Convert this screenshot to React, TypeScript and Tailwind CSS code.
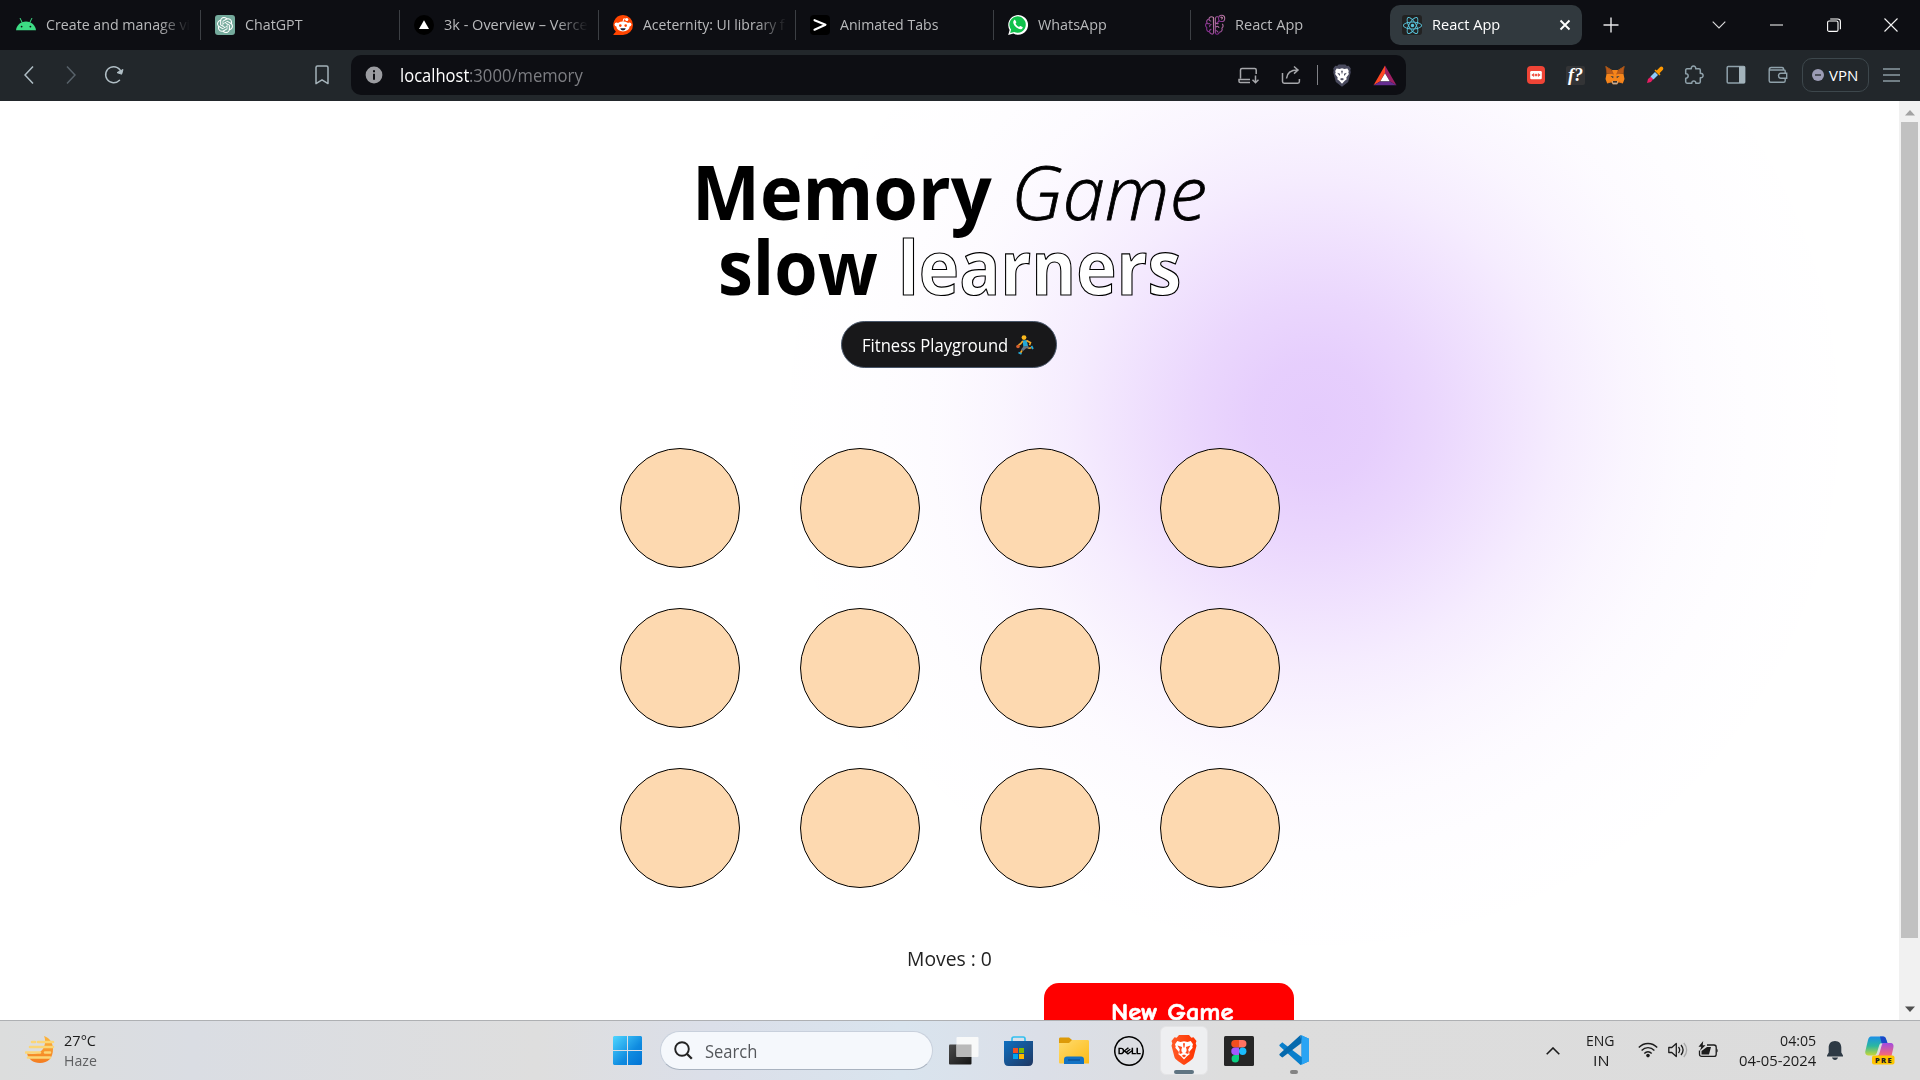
import { useLayoutEffect, useRef, useState, type ReactNode } from 'react';
import { SiDell, SiOpenai, SiReact } from 'react-icons/si';

/** One line of text condensed or widened to a given advance width. */
function Fit({ w, children, className = '' }: { w: number; children: ReactNode; className?: string }) {
  const ref = useRef<HTMLSpanElement>(null);
  const [scale, setScale] = useState(1);
  useLayoutEffect(() => {
    if (ref.current) setScale(w / ref.current.offsetWidth);
  }, [w]);
  return (
    <span className={`block shrink-0 whitespace-nowrap ${className}`} style={{ width: w }}>
      <span ref={ref} className="inline-block origin-left whitespace-nowrap" style={{ transform: `scaleX(${scale})` }}>
        {children}
      </span>
    </span>
  );
}

const AndroidIcon = () => (
  <svg viewBox="0 0 20 20" className="size-5 shrink-0">
    <path d="M0 15.2C.4 10.600 4.500 6.500 10 6.500s9.600 4.100 10 8.700z" fill="#3ddc84" />
    <path d="M4.200 3.400l2 4.200M15.800 3.400l-2 4.200" stroke="#3ddc84" strokeWidth="1" strokeLinecap="round" />
    <circle cx="5.600" cy="11.600" r=".9" fill="#0e0f14" />
    <circle cx="14.400" cy="11.600" r=".9" fill="#0e0f14" />
  </svg>
);

const ChatIcon = () => (
  <div className="flex size-5 shrink-0 items-center justify-center rounded-[3px] bg-[#74aa9c]">
    <SiOpenai className="size-4 text-white" />
  </div>
);

const VercelIcon = () => (
  <svg viewBox="0 0 20 20" className="size-5 shrink-0">
    <circle cx="10" cy="10" r="10" fill="#000" />
    <path d="M10 5.200L15 14H5z" fill="#fff" />
  </svg>
);

const RedditIcon = () => (
  <svg viewBox="0 0 20 20" className="size-5 shrink-0">
    <path d="M10 0a10 10 0 0 1 0 20H1.200c-.8 0-1-.6-.5-1.100l2.200-2.200A10 10 0 0 1 10 0z" fill="#ff4500" />
    <circle cx="3.600" cy="9.600" r="2" fill="#fff" />
    <circle cx="16.400" cy="9.600" r="2" fill="#fff" />
    <ellipse cx="10" cy="11.400" rx="6.600" ry="5" fill="#fff" />
    <path d="M10 6.800l.7-3 2.600.5" stroke="#fff" strokeWidth="1" fill="none" />
    <circle cx="13.800" cy="4.400" r="1.500" fill="#fff" />
    <circle cx="7.300" cy="10.600" r="1.300" fill="#ff4500" />
    <circle cx="12.700" cy="10.600" r="1.300" fill="#ff4500" />
    <path d="M7.300 13.200h5.400c-.4 1.600-1.400 2.200-2.700 2.200s-2.300-.6-2.700-2.200z" fill="#223" />
  </svg>
);

const AceternityIcon = () => (
  <svg viewBox="0 0 20 20" className="size-5 shrink-0">
    <rect width="20" height="20" rx="4" fill="#000" />
    <path d="M4.500 5.200l11 4.500-11 5" stroke="#fff" strokeWidth="2.100" fill="none" strokeLinejoin="round" strokeLinecap="round" />
  </svg>
);

const WhatsAppIcon = () => (
  <svg viewBox="0 0 20 20" className="size-5 shrink-0">
    <path d="M.2 19.900l1.400-5A9.900 9.900 0 1 1 5.400 18.600z" fill="#fff" />
    <path d="M2.200 17.900l.9-3.300a8.200 8.200 0 1 1 3 2.400z" fill="#10c14b" />
    <path
      d="M7.300 5.200c-.3-.6-.9-.5-1.300 0-1.900 2.100.1 5 1.700 6.600 1.700 1.700 4.600 3.300 6.400 1.900.7-.6.9-1.500.3-1.800l-1.900-.9c-.4-.2-.7.1-1.200.8-.4.5-3.600-2-3.700-3.300.5-.5.9-1 .7-1.400z"
      fill="#fff"
    />
  </svg>
);

const BrainIcon = () => (
  <svg viewBox="0 0 20 20" className="size-5 shrink-0 overflow-visible">
    <defs>
      <linearGradient id="brain" x1="0" x2="1" y1=".8" y2="0">
        <stop offset="0" stopColor="#7a1f8a" />
        <stop offset="1" stopColor="#c58ba8" />
      </linearGradient>
    </defs>
    <g fill="none" stroke="url(#brain)" strokeWidth="1.100">
      <path d="M8.400 2.400C6 .8 4 2.400 4 4 1.600 4.600 1.200 6.600 2 8c-1.900 1-1.900 3.400-.2 4.600C1 15 2.600 16.700 4.400 16.800c1 2.600 3.600 3 4.200 1z" />
      <path d="M10.300 3c.8-1.400 2-1.500 2.600-1M10.300 18c1 2 3.400 1.600 4-.8 2.400-.2 3.400-2.200 2.600-4 1.400-1.200 1.600-3 .4-4.400" />
      <path d="M4 4c0 1.600 1 2.200 2.200 2M2 8c1 1 2 1 3 .4M6.500 9.500C5 9.500 4 11 5 12M4.400 16.800c0-1.600.8-2.400 2-2.400M10.500 7c.2 1.400 1.600 2 3 1.400M11 12c1-1 2.600-.8 3 .8M10.600 15.500c1 0 1.800.6 2.400 1.700M10.300 3v15" />
      <circle cx="16.600" cy="3.400" r="3.100" />
      <path d="M15.800 3c.1-1.200 1.700-1 1.600 0 0 .7-.8.7-.8 1.400M14 6l-2 2" />
    </g>
  </svg>
);

const ReactIcon = () => (
  <div className="flex size-5 shrink-0 items-center justify-center rounded-[3px] bg-[#222]">
    <SiReact className="size-[19px] text-[#58c4dc]" />
  </div>
);

type TabData = { icon: ReactNode; title: string; w: number; tabWidth: number; clipped?: boolean };

const tabs: TabData[] = [
  { icon: <AndroidIcon />, title: 'Create and manage vi', w: 144, tabWidth: 199, clipped: true },
  { icon: <ChatIcon />, title: 'ChatGPT', w: 58, tabWidth: 199 },
  { icon: <VercelIcon />, title: '3k - Overview – Verce', w: 144, tabWidth: 199, clipped: true },
  { icon: <RedditIcon />, title: 'Aceternity: UI library f', w: 142, tabWidth: 197, clipped: true },
  { icon: <AceternityIcon />, title: 'Animated Tabs', w: 98, tabWidth: 198 },
  { icon: <WhatsAppIcon />, title: 'WhatsApp', w: 69, tabWidth: 197 },
  { icon: <BrainIcon />, title: 'React App', w: 68, tabWidth: 199 },
];

function Tab({ tab, last }: { tab: TabData; last: boolean }) {
  return (
    <div className="flex h-10 shrink-0 items-center pl-[14px]" style={{ width: tab.tabWidth }}>
      {tab.icon}
      <div
        className={
          tab.clipped
            ? 'ml-[10px] w-[144px] -translate-y-px overflow-hidden [mask-image:linear-gradient(90deg,#000_78%,transparent)]'
            : 'ml-[10px] w-[144px] -translate-y-px overflow-hidden'
        }
      >
        <Fit w={tab.w} className="text-[15px] leading-5 text-[#b9babc]">{tab.title}</Fit>
      </div>
      {!last && <div className="ml-auto h-[30px] w-px bg-[#3c3f44]" />}
    </div>
  );
}

function TabBar() {
  return (
    <div className="flex h-[50px] items-center bg-[#0d0e13] pl-[2px]">
      {tabs.map((t, i) => (
        <Tab key={i} tab={t} last={i === tabs.length - 1} />
      ))}
      <div className="flex h-10 w-[192px] shrink-0 items-center rounded-[10px] bg-[#31393e] pl-3">
        <ReactIcon />
        <Fit w={68} className="ml-[10px] -translate-y-px text-[15px] leading-5 text-white">React App</Fit>
        <svg viewBox="0 0 12 12" className="ml-[59px] size-3">
          <path d="M1.500 1.500l9 9M10.500 1.500l-9 9" stroke="#fff" strokeWidth="1.900" />
        </svg>
      </div>
      <svg viewBox="0 0 16 16" className="ml-[21px] size-4 shrink-0">
        <path d="M8 .5v15M.5 8h15" stroke="#e8e8ea" strokeWidth="1.400" />
      </svg>
      <svg viewBox="0 0 14 8" className="ml-[93px] h-2 w-[14px] shrink-0">
        <path d="M.7.700L7 7 13.300.700" stroke="#dcdcde" strokeWidth="1.100" fill="none" />
      </svg>
      <svg viewBox="0 0 13 13" className="ml-[44px] size-[13px] shrink-0">
        <path d="M0 6h13" stroke="#fff" strokeWidth="1" />
      </svg>
      <svg viewBox="0 0 14 14" className="ml-[44px] size-[14px] shrink-0">
        <rect x=".6" y="3" width="10.400" height="10.400" rx="1.500" stroke="#fff" fill="none" strokeWidth="1.100" />
        <path d="M3.200 1h7.500c1.700 0 2.700 1 2.700 2.700v7.500" stroke="#fff" fill="none" strokeWidth="1.100" />
      </svg>
      <svg viewBox="0 0 14 14" className="ml-[43px] size-[14px] shrink-0">
        <path d="M.5.500l13 13M13.500.500l-13 13" stroke="#f4f4f4" strokeWidth="1.100" />
      </svg>
    </div>
  );
}

const LION =
  'M10 4.500l2.600.6 3-.5 1.500 2.600-.5 1.600.6 1.700-2.700 3.600.4 1.900-2 1.500L10 20.500l-2.900-3-2-1.500.4-1.900-2.700-3.600.6-1.700-.5-1.600 1.500-2.600 3 .5z';

function LionShield() {
  return (
    <svg viewBox="0 0 20 24" className="ml-[14px] h-[23px] w-5 shrink-0">
      <path d="M6.500.500h7l1.600 1.600 1.900-.3 2.200 3-.5 1.700.5 2-2.800 10.300-6.400 5-6.400-5L.8 8.500l.5-2-.5-1.700 2.200-3 1.900.3z" fill="#494a5e" />
      <path d={LION} fill="#fff" />
      <path d="M5 9l3 1.200-.4 2.400zM15 9l-3 1.200.4 2.400zM10 14.500l-2.300 1.200L10 17.300l2.300-1.600zM9 7l1 4 1-4z" fill="#494a5e" />
    </svg>
  );
}

const FoxIcon = () => (
  <svg viewBox="0 0 20 20" className="ml-[20px] h-5 w-5 shrink-0">
    <path d="M.5 1l6.500 4h6l6.500-4L18.300 8l1.200 6-1.700 4.500-4-1.200-1.600 1.900H7.800l-1.600-1.900-4 1.200L.5 14l1.200-6z" fill="#f6851b" />
    <path d="M.5 1L7.500 5.800 6 8.500l-4.300.2L1 6zM19.500 1l-7 4.800L14 8.500l4.300.2L19 6z" fill="#763d16" />
    <path d="M1 1.500l6.500 4.800L9 9.500 1.800 8zM19 1.500l-6.500 4.800L11 9.500 18.200 8z" fill="#b85a1a" />
    <path d="M5.500 11l3 .6-.4 1.600zM14.500 11l-3 .6.400 1.600z" fill="#233447" />
    <path d="M7 16.300h6l-.8 2.900H7.800z" fill="#c0ad9e" />
    <path d="M8 16.200h4v1.300H8z" fill="#161616" />
    <path d="M3 17.800l3.200-1.300M17 17.800l-3.200-1.300" stroke="#e2761b" />
  </svg>
);

function Toolbar() {
  return (
    <div className="flex h-[51px] items-center bg-[#22272b] pb-px pl-6">
      <svg viewBox="0 0 10 20" className="h-5 w-[10px] shrink-0">
        <path d="M9 1.500L1 10l8 8.500" stroke="#b0bec5" strokeWidth="1.500" fill="none" />
      </svg>
      <svg viewBox="0 0 10 20" className="ml-8 h-5 w-[10px] shrink-0">
        <path d="M1 1.500L9 10l-8 8.500" stroke="#58626a" strokeWidth="1.500" fill="none" />
      </svg>
      <svg viewBox="0 0 20 20" className="ml-7 size-5 shrink-0">
        <path d="M15.500 15.200A8 8 0 1 1 17.500 8" stroke="#b0bec5" strokeWidth="1.500" fill="none" strokeLinecap="round" />
        <path d="M13 7.600l4.600 1.600L19 4.500z" fill="#b0bec5" stroke="#b0bec5" strokeLinejoin="round" />
      </svg>
      <svg viewBox="0 0 14 20" className="ml-[191px] h-5 w-[14px] shrink-0">
        <path d="M1 2.500C1 1.500 1.600 1 2.500 1h9c.9 0 1.500.5 1.500 1.500V18.600L7 14.800 1 18.600z" stroke="#a4b2b9" strokeWidth="1.500" fill="none" strokeLinejoin="round" />
      </svg>
      <div className="ml-[22px] flex h-10 w-[1055px] shrink-0 items-center rounded-[10px] bg-[#0d0e13] pl-[14px]">
        <svg viewBox="0 0 18 18" className="size-[18px] shrink-0">
          <circle cx="9" cy="9" r="8.400" fill="#9b9ca1" />
          <path d="M9 4.300v2M9 7.700v6" stroke="#0d0e13" strokeWidth="2" />
        </svg>
        <div className="ml-[17px] flex text-[17.5px] leading-6">
          <Fit w={69} className="text-white">localhost</Fit>
          <Fit w={114} className="text-[#7c7d82]">:3000/memory</Fit>
        </div>
        <svg viewBox="0 0 21 18" className="ml-auto h-[18px] w-[21px] shrink-0 translate-y-[1px]">
          <path d="M18.200 7V3c0-.9-.5-1.500-1.500-1.500H4C3 1.500 2.500 2.100 2.500 3v8.500M12 12.500H1v1.800c0 .9.500 1.300 1.300 1.300H12" stroke="#a6a7ab" strokeWidth="1.500" fill="none" />
          <path d="M17.500 8.500v7M14.500 12.800l3 3 3-3" stroke="#a6a7ab" strokeWidth="1.500" fill="none" />
        </svg>
        <svg viewBox="0 0 20 20" className="ml-[22px] size-5 shrink-0">
          <path d="M1.500 8v8.500c0 1 .7 1.700 1.700 1.700h13.500c1 0 1.700-.7 1.700-1.700V14" stroke="#a6a7ab" strokeWidth="1.500" fill="none" />
          <path d="M5.500 13.500C6 8.500 9 5 16.500 5M13 1.500L17 5l-4 3.600" stroke="#a6a7ab" strokeWidth="1.500" fill="none" />
        </svg>
        <div className="ml-[16px] h-5 w-px shrink-0 bg-[#808186]" />
        <LionShield />
        <svg viewBox="0 0 24 21" className="mr-[9px] ml-[21px] h-[21px] w-6 shrink-0">
          <path d="M12 .5V8L7 16.500.500 20.300z" fill="#ff4724" />
          <path d="M12 .5l11.500 19.800L17 16.500 12 8z" fill="#9e1f63" />
          <path d="M.5 20.300L7 16.500h10l6.500 3.800z" fill="#662d91" />
          <path d="M12 8.200l4.700 8.100H7.300z" fill="#fff" />
        </svg>
      </div>
      <svg viewBox="0 0 18 18" className="ml-[121px] size-[18px] shrink-0">
        <rect width="18" height="18" rx="4" fill="#ef4436" />
        <rect x="3.200" y="5" width="11.600" height="8.200" rx="1.200" fill="#fff" />
        <path d="M4.800 9l2-1.400v2.800zM13.200 9l-2-1.400v2.800zM8 8.300h2v1.500H8z" fill="#ef4436" stroke="#ef4436" strokeWidth=".6" />
      </svg>
      <div className="ml-[21px] flex size-[19px] shrink-0 items-center justify-center rounded-[2px] bg-[#333436]">
        <span className="font-['Liberation_Serif',serif] text-[18px] leading-none font-bold text-white italic">f?</span>
      </div>
      <FoxIcon />
      <svg viewBox="0 0 18 18" className="ml-[21px] size-[18px] shrink-0">
        <path d="M1 17l1-4 3-2.500 2.500 2.300L5 16z" fill="#e91e63" />
        <path d="M4.500 10.500L9 6l3 3-4.500 4.500z" fill="#90caf9" />
        <path d="M8.500 4.500l5 5 1-1-1-1.300 3.200-3.200c1.800-1.900-.9-4.600-2.800-2.800L10.700 4.400 9.500 3.500z" fill="#ff9800" />
      </svg>
      <svg viewBox="0 0 20 20" className="ml-[20px] size-5 shrink-0">
        <path
          d="M3 3.800h4.300c-.6-3.700 5-3.700 4.400 0H15c.9 0 1.300.5 1.300 1.300v3.300c3.700-.6 3.700 5 0 4.400v4c0 .9-.4 1.400-1.300 1.400h-3.200c.3-3-4.300-3-4 0H3c-.9 0-1.300-.5-1.300-1.400v-3.600c3.300.3 3.300-4.800 0-4.500V5.100c0-.8.400-1.300 1.300-1.300z"
          stroke="#8fa1aa" strokeWidth="1.500" fill="none" strokeLinejoin="round"
        />
      </svg>
      <svg viewBox="0 0 20 20" className="ml-[22px] size-5 shrink-0">
        <rect x="1.200" y="1.500" width="17.500" height="16.500" rx="1" stroke="#8fa1aa" strokeWidth="1.500" fill="none" />
        <path d="M13 1.500h6v16.500h-6z" fill="#a3b3bb" />
      </svg>
      <svg viewBox="0 0 20 20" className="ml-[22px] size-5 shrink-0">
        <path d="M1.200 5v10.700c0 .9.600 1.500 1.500 1.500h13c.9 0 1.500-.6 1.500-1.500V6c0-.6-.4-1-1-1zm0 0c0-1.700.8-2.500 2-2.500H14c1.200 0 1.700.7 1.700 2.500" stroke="#8fa1aa" strokeWidth="1.400" fill="none" />
        <path d="M18.700 8.300h-6c-1.500 0-2.200 1-2.200 2.200s.7 2.700 2.200 2.700h6z" stroke="#8fa1aa" strokeWidth="1.400" fill="#22272b" />
      </svg>
      <div className="ml-[14px] flex h-[34px] w-[67px] shrink-0 items-center rounded-[10px] border border-[#3d474c] pl-[9px]">
        <svg viewBox="0 0 12 12" className="size-3">
          <circle cx="6" cy="6" r="6" fill="#9b9bb4" />
          <path d="M3 6h6" stroke="#22272b" strokeWidth="1.300" />
        </svg>
        <Fit w={29} className="ml-[5px] text-[15px] leading-5 text-white">VPN</Fit>
      </div>
      <svg viewBox="0 0 17 14" className="ml-[14px] h-[14px] w-[17px] shrink-0">
        <path d="M0 1h17M0 7h17M0 13h17" stroke="#8c9ca4" strokeWidth="1.400" />
      </svg>
    </div>
  );
}

const Runner = () => (
  <svg viewBox="0 0 18 20" className="ml-[8px] h-5 w-[18px]">
    <circle cx="8" cy="2.600" r="2.400" fill="#fbb91e" />
    <path d="M6.500 5.500l4.200-.5 1.300 6-4.600 1z" fill="#23a9d8" />
    <path d="M10.500 5.500l4 2.200-1 2.500M6.800 6L4.600 8.800 2.500 10" stroke="#f0a92a" strokeWidth="1.600" fill="none" />
    <path d="M7.500 11.500l4.800-.5 1 3-3-.7L7 16l-2-1.500z" fill="#647687" />
    <path d="M6 15.500L4.500 18M12.500 13.300l3-.5" stroke="#f0a92a" strokeWidth="1.600" />
    <path d="M2.500 17.500l3 1.600M15.500 11l1.500 3" stroke="#23a9d8" strokeWidth="1.700" />
    <circle cx="2" cy="11.500" r="1.800" fill="#d65f2e" />
  </svg>
);

function Game() {
  return (
    <main className="flex h-[919px] flex-1 flex-col items-center overflow-hidden bg-white bg-[radial-gradient(circle_555px_at_1314px_320px,rgba(168,85,247,0.305)_0,rgba(168,85,247,0.285)_11%,rgba(168,85,247,0.235)_22%,rgba(168,85,247,0.172)_33%,rgba(168,85,247,0.11)_44%,rgba(168,85,247,0.06)_56%,rgba(168,85,247,0.028)_67%,rgba(168,85,247,0.012)_78%,rgba(168,85,247,0.004)_89%,transparent)]">
      <h1 className="mt-[53px] flex flex-col items-center text-[74.500px] leading-[75px] text-black">
        <span className="flex">
          <Fit w={300} className="font-bold">Memory</Fit>
          <Fit w={196} className="ml-[19px] font-light italic [-webkit-text-stroke:0.8px_#000]">Game</Fit>
        </span>
        <span className="flex font-bold">
          <Fit w={160}>slow</Fit>
          <Fit w={283} className="ml-[20px] text-white [-webkit-text-stroke:1.200px_#000]">learners</Fit>
        </span>
      </h1>
      <button className="mt-[17px] mr-[2px] flex h-[47px] w-[216px] shrink-0 items-center rounded-full border border-[#475569] bg-[#18181a] pl-[20px] text-[17.5px] text-white">
        <Fit w={146} className="translate-y-px font-medium">Fitness Playground</Fit>
        <Runner />
      </button>
      <div className="mt-[80px] grid shrink-0 grid-cols-4 gap-x-[60px] gap-y-[40px]">
        {Array.from({ length: 12 }, (_, i) => (
          <div key={i} className="size-[120px] rounded-full border border-black bg-[#fdd9b0]" />
        ))}
      </div>
      <Fit w={85} className="mt-[56px] text-[20px] leading-[30px] text-[#222]">Moves : 0</Fit>
      <button className="mt-[9px] ml-[439px] flex h-[60px] w-[250px] shrink-0 justify-center rounded-[15px] bg-[#ff0000] pt-[12px]">
        <Fit w={123} className="font-['Comic_Sans_MS','Comic_Neue','Lato',sans-serif] text-[25px] leading-[34px] font-bold text-white [-webkit-text-stroke:0.6px_white]">
          New Game
        </Fit>
      </button>
    </main>
  );
}

function Scrollbar() {
  return (
    <div className="flex w-[21px] shrink-0 flex-col items-center bg-[#f1f1f1]">
      <svg viewBox="0 0 10 6" className="mt-[9px] h-[6px] w-[10px]"><path d="M5 0l5 5.500H0z" fill="#a3a3a3" /></svg>
      <div className="mt-[6px] h-[816px] w-[17px] bg-[#c1c1c1]" />
      <svg viewBox="0 0 10 6" className="mt-auto mb-[8px] h-[6px] w-[10px]"><path d="M5 6l5-5.500H0z" fill="#505050" /></svg>
    </div>
  );
}

function Taskbar() {
  return (
    <footer className="flex h-[60px] shrink-0 items-center border-t border-[#aeb0b3] bg-[linear-gradient(90deg,#dcdddd_0%,#dadde3_10%,#dedede_28%,#dbdfe9_37%,#d9e4ee_47%,#dbdfe8_54%,#dddddd_64%,#dcdcdc_100%)]">
      <svg viewBox="0 0 30 30" className="ml-[25px] size-[30px] shrink-0 -translate-y-px">
        <defs>
          <linearGradient id="sun" x1="0" x2="0" y1="0" y2="1">
            <stop offset="0" stopColor="#fbb63e" />
            <stop offset="1" stopColor="#f47c20" />
          </linearGradient>
        </defs>
        <path d="M19 1c5 1.500 9 6 9 13 0 9-5 14-13 14-7 0-12-4-13-10 6 2 14 1 17-6 1.500-4 1.500-8 0-11z" fill="url(#sun)" />
        <path d="M7 7h3M13 7h15M5 12h23M1 17.500h14M20 17.500h5M3 22.500h22" stroke="#fbd676" strokeWidth="2.600" strokeLinecap="round" />
      </svg>
      <div className="ml-[9px] -translate-y-[1.5px] text-[15px] leading-5">
        <Fit w={32} className="text-[#1c1c1c]">27°C</Fit>
        <Fit w={33} className="text-[#5e5f61]">Haze</Fit>
      </div>
      <svg viewBox="0 0 29 29" className="ml-[516px] size-[29px] shrink-0">
        <defs>
          <linearGradient id="win" x1="0" x2="1" y1="0" y2="1">
            <stop offset="0" stopColor="#4fd6ff" />
            <stop offset=".6" stopColor="#0f8be0" />
            <stop offset="1" stopColor="#0273d4" />
          </linearGradient>
        </defs>
        <path d="M1 0h13v14H0V1zM15 0h13l1 1v13H15zM0 15h14v14H1l-1-1zM15 15h14v13l-1 1H15z" fill="url(#win)" />
      </svg>
      <div className="ml-[18px] flex h-[39px] w-[273px] shrink-0 items-center rounded-full border border-[#c8d0dc] border-b-[#a9b3c0] bg-[#f5f8fc] pl-[13px]">
        <svg viewBox="0 0 19 19" className="size-[19px]">
          <circle cx="8" cy="8" r="6.800" stroke="#222" strokeWidth="1.900" fill="none" />
          <path d="M12.800 12.800l5 5" stroke="#222" strokeWidth="2.300" />
        </svg>
        <Fit w={52} className="ml-3 text-[17.5px] leading-6 text-[#55585c]">Search</Fit>
      </div>
      <svg viewBox="0 0 30 28" className="ml-4 h-[28px] w-[30px] shrink-0">
        <defs>
          <linearGradient id="tv" x1="0" x2="1" y1="0" y2="1">
            <stop offset="0" stopColor="#4b4b4b" />
            <stop offset="1" stopColor="#151515" />
          </linearGradient>
        </defs>
        <rect y="7.500" width="22.500" height="20" rx="1" fill="url(#tv)" />
        <rect x="7.500" y="0" width="22" height="20" rx="1" fill="#fafafa" opacity=".95" />
        <rect x="7.500" y="7.500" width="15" height="12.500" fill="#b9b9b9" />
      </svg>
      <svg viewBox="0 0 29 30" className="ml-[25px] h-[30px] w-[29px] shrink-0">
        <defs>
          <linearGradient id="store" x1="0" x2="1" y1="0" y2="1">
            <stop offset="0" stopColor="#0f6fc0" />
            <stop offset="1" stopColor="#1f3762" />
          </linearGradient>
        </defs>
        <path d="M8 6V3c0-1.200.6-2 1.800-2h9.400C20.400 1 21 1.800 21 3v3" stroke="#34c0f0" strokeWidth="1.700" fill="none" />
        <path d="M0 5h29v20c0 3-1.500 5-4.500 5h-20C1.500 30 0 28 0 25z" fill="url(#store)" />
        <path d="M9 12h5v5H9z" fill="#f25022" /><path d="M15 12h5v5h-5z" fill="#7fba00" />
        <path d="M9 18h5v5H9z" fill="#00a4ef" /><path d="M15 18h5v5h-5z" fill="#ffb900" />
      </svg>
      <svg viewBox="0 0 30 28" className="ml-[26px] h-[28px] w-[30px] shrink-0">
        <defs>
          <linearGradient id="fold" x1="0" x2="1" y1="0" y2="1">
            <stop offset="0" stopColor="#ffdb6e" />
            <stop offset="1" stopColor="#fdbb16" />
          </linearGradient>
        </defs>
        <path d="M0 2c0-1 .6-1.500 1.500-1.500H10L13 3v5H0z" fill="#dd9a08" />
        <path d="M0 6h10l3-3h15.500c1 0 1.500.5 1.500 1.500v22H1.500c-1 0-1.500-.5-1.500-1.500z" fill="url(#fold)" />
        <path d="M5 27v-4.500c0-2 1-3 3-3h14c2 0 3 1 3 3V27z" fill="#1272c4" />
        <path d="M9 23h12" stroke="#0b4a8d" strokeWidth="1.200" />
      </svg>
      <SiDell className="ml-[25px] size-[30px] shrink-0 text-black" />
      <div className="ml-4 flex h-[49px] w-12 shrink-0 flex-col items-center rounded-[6px] border border-[#e4e4e6] bg-[#eeeff1] pt-[8px]">
        <svg viewBox="0 0 26 30" className="h-[30px] w-[26px] shrink-0">
          <defs>
            <linearGradient id="brave" x1="0" x2="1">
              <stop offset="0" stopColor="#ff5a26" />
              <stop offset="1" stopColor="#ff3300" />
            </linearGradient>
          </defs>
          <path d="M8 0h10l2.300 2.700 2.200-.4L25.500 6l-.8 2.200.8 2.500-3 11.500c-.7 2-4.500 4.800-9.500 7.800-5-3-8.800-5.800-9.500-7.800L.5 10.700l.8-2.500L.5 6l3-3.700 2.200.4z" fill="url(#brave)" />
          <path d="M13 6.200l3.500.8 3.200-.9 2.300 3.200-.7 2 .4 1.500-3.600 4.200.5 2.200-2.600 2L13 24.500l-3-3.300-2.600-2 .5-2.200-3.600-4.200.4-1.500-.7-2 2.300-3.200 3.200.9z" fill="#fff" />
          <path d="M6.500 10.500l4.600 1.500-.8 3 .5 2 1 .9-3 1-.6-2.100.6-2.300zM19.500 10.500L14.900 12l.8 3-.5 2-1 .9 3 1 .6-2.100-.6-2.300zM13 19.500l-2.300 1.200 2.300 1.800 2.300-1.800zM12 8.300h2l-.5 4.200h-1z" fill="#ff4a1c" />
        </svg>
        <div className="mt-[5px] h-1 w-5 shrink-0 rounded-full bg-[#5f7482]" />
      </div>
      <svg viewBox="0 0 30 30" className="ml-4 size-[30px] shrink-0">
        <rect width="30" height="30" rx="1.500" fill="#262626" />
        <path d="M11 4h4v7.500h-4a3.700 3.700 0 0 1 0-7.500z" fill="#f24e1e" />
        <path d="M15 4h3.700a3.700 3.700 0 0 1 0 7.500H15z" fill="#ff7262" />
        <path d="M11 11.500h4V19h-4a3.700 3.700 0 0 1 0-7.500z" fill="#a259ff" />
        <circle cx="18.700" cy="15.200" r="3.700" fill="#1abcfe" />
        <path d="M11 19h4v3.700a3.700 3.700 0 1 1-4-3.700z" fill="#0acf83" />
      </svg>
      <div className="ml-[25px] flex h-[49px] w-[30px] shrink-0 flex-col items-center pt-[9px]">
        <svg viewBox="0 0 30 30" className="size-[30px] shrink-0">
          <path d="M21.500 0L30 3.800v22.400L21.500 30 .8 11.300c-.6-.6-.6-1.200 0-1.800l1.800-1.600c.5-.4 1-.4 1.500 0L22.500 22V8z" fill="#0a7fcb" />
          <path d="M22.500 8L4.100 22.100c-.5.400-1 .4-1.500 0L.8 20.500c-.6-.6-.6-1.200 0-1.800L21.500 0z" fill="#0569ad" />
          <path d="M22 0l8 3.800v22.400L22 30c.7-.6.800-1 .8-1.800V1.800C22.800 1 22.700.600 22 0z" fill="#2aa4f4" />
        </svg>
        <div className="mt-[5px] h-1 w-2 shrink-0 rounded-full bg-[#838383]" />
      </div>
      <svg viewBox="0 0 14 8" className="ml-[237px] h-2 w-[14px] shrink-0">
        <path d="M.7 7.300L7 1l6.300 6.300" stroke="#1c1c1c" strokeWidth="1.600" fill="none" />
      </svg>
      <div className="ml-[26px] flex w-[29px] shrink-0 -translate-y-[1.5px] flex-col items-center text-[15px] leading-5 text-[#1c1c1c]">
        <Fit w={29}>ENG</Fit>
        <Fit w={16}>IN</Fit>
      </div>
      <svg viewBox="0 0 20 16" className="ml-[23px] h-4 w-5 shrink-0 -translate-y-px">
        <path d="M.8 5.500c5-5.400 13.400-5.400 18.400 0M3.600 8.500c3.600-3.800 9.200-3.800 12.800 0M6.300 11.400c2.200-2.300 5.200-2.300 7.400 0" stroke="#1c1c1c" strokeWidth="1.400" fill="none" />
        <circle cx="10" cy="13.600" r="1.800" fill="#1c1c1c" />
      </svg>
      <svg viewBox="0 0 20 16" className="ml-[10px] h-4 w-5 shrink-0 -translate-y-px">
        <path d="M.8 5.500h3L8.300 1.500v13l-4.500-4h-3z" stroke="#1c1c1c" strokeWidth="1.300" fill="none" strokeLinejoin="round" />
        <path d="M10.500 5c1.400 1.800 1.400 4.200 0 6M13 3c2.500 3 2.500 7 0 10" stroke="#1c1c1c" strokeWidth="1.300" fill="none" />
        <path d="M15.800 1c3.800 4.200 3.800 9.800 0 14" stroke="#a8a8a8" strokeWidth="1.300" fill="none" />
      </svg>
      <svg viewBox="0 0 21 17" className="ml-[10px] h-[17px] w-[21px] shrink-0 -translate-y-px">
        <path d="M9 4h7c1.400 0 2.200.8 2.200 2.200v7c0 1.400-.8 2.200-2.200 2.200H3.700c-1.400 0-2.200-.8-2.200-2.200V9.500" stroke="#1c1c1c" strokeWidth="1.300" fill="none" />
        <path d="M9 6h4l-2 7.500H3.500V10zM18.500 7.500c1.600.4 1.600 4 0 4.400z" fill="#1c1c1c" />
        <path d="M5.200 0L.5 5.800h2.800L2 9.800l5.500-5.600H4.700z" fill="#1c1c1c" />
      </svg>
      <div className="ml-[20px] flex w-[77px] shrink-0 -translate-y-[1.5px] flex-col items-end text-[15px] leading-5 text-[#1c1c1c]">
        <Fit w={36}>04:05</Fit>
        <Fit w={77}>04-05-2024</Fit>
      </div>
      <svg viewBox="0 0 16 19" className="ml-[11px] h-[19px] w-4 shrink-0">
        <path d="M8 0c4 0 6.300 2.800 6.300 6.500v5l1.700 3v1H0v-1l1.700-3v-5C1.700 2.800 4 0 8 0zM5 16.500h6C10.500 18 9.500 19 8 19s-2.500-1-3-2.500z" fill="#2e3a45" />
      </svg>
      <svg viewBox="0 0 30 29" className="ml-[22px] h-[29px] w-[30px] shrink-0">
        <defs>
          <linearGradient id="cpL" x1="0" x2="0" y1="0" y2="1">
            <stop offset="0" stopColor="#1a8fe8" />
            <stop offset=".5" stopColor="#2bb7a0" />
            <stop offset="1" stopColor="#c9d836" />
          </linearGradient>
          <linearGradient id="cpR" x1="0" x2="0" y1="0" y2="1">
            <stop offset="0" stopColor="#a24be0" />
            <stop offset="1" stopColor="#fb6a70" />
          </linearGradient>
        </defs>
        <path d="M6 .500h12c2 0 2.600 1 3.200 3l1 3.500h-5c-2 0-2.600 1-3.200 3l-2 6.500c-.7 2-1.500 3-3.500 3h-5C.5 19.500-.3 17 .5 14.500L3 4C3.600 1.700 4.500.500 6 .500z" fill="url(#cpL)" />
        <path d="M15 .500h3c2 0 2.600 1 3.200 3l1.500 4h-6z" fill="#1b48c8" />
        <path d="M18.500 7h7c2.800 0 3.500 2.300 2.800 5l-1.800 8h-14c1-.500 1.500-1.500 2-3l2-7c.5-1.800 1-2.500 2-3z" fill="url(#cpR)" />
        <rect x="7" y="19.500" width="22.500" height="9" rx="2" fill="#fdc500" />
        <text x="10" y="27" fontSize="7.500" fontWeight="800" textLength="16.500" fill="#222" fontFamily="Open Sans, sans-serif">PRE</text>
      </svg>
    </footer>
  );
}

export default function App() {
  return (
    <div className="flex h-[1080px] w-[1920px] flex-col overflow-hidden bg-white font-['Open_Sans','Noto_Sans',sans-serif]">
      <TabBar />
      <Toolbar />
      <div className="flex h-[919px] shrink-0">
        <Game />
        <Scrollbar />
      </div>
      <Taskbar />
    </div>
  );
}
